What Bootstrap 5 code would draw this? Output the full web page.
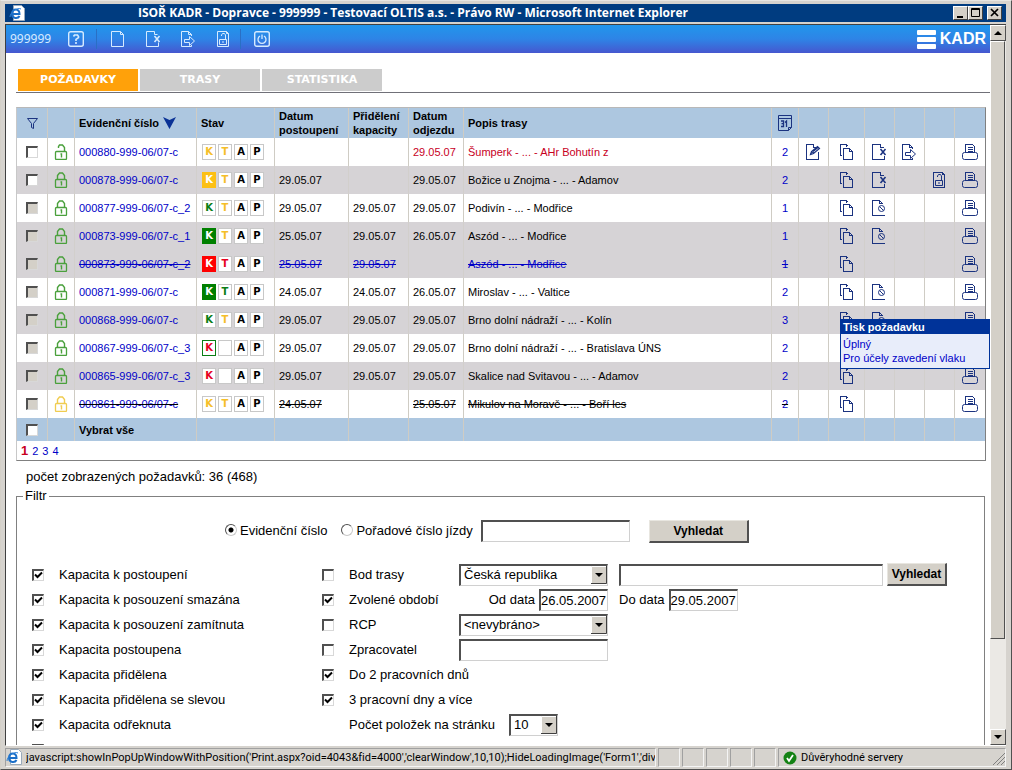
<!DOCTYPE html>
<html lang="cs">
<head>
<meta charset="utf-8">
<meta name="viewport" content="width=device-width, initial-scale=1">
<title>ISOŘ KADR</title>
<link href="https://cdn.jsdelivr.net/npm/bootstrap@5.3.0/dist/css/bootstrap.min.css" rel="stylesheet">
<script src="https://cdn.jsdelivr.net/npm/bootstrap@5.3.0/dist/js/bootstrap.bundle.min.js"></script>
<style>
:root{--face:#d4d0c8;--navy:#1b3380;--line:#cfccc4}
body{font-family:"Liberation Sans",Arial,sans-serif;font-size:11px;line-height:14px;color:#000;background:#d6d3ce}
a{text-decoration:none;color:#0000c8}
button,input,select{font-family:inherit;border-radius:0}
svg{display:block;flex:none}
.ico{width:16px;height:16px;fill:none;stroke:currentColor}
.frame{height:100vh;padding:3px 5px 2px 4px;border:1px solid;border-color:#e8e6e2 #505050 #505050 #d4d0c8}
/* window caption */
.caption{height:18px;background:#003c80;color:#fff;font:bold 12px/18px "Open Sans",sans-serif}
.caption .title{padding-right:152px}
.capbtn{width:15px;height:14px;background:var(--face);border:1px solid;border-color:#fff #404040 #404040 #fff;padding:0;color:#000}
.work{min-height:0;margin-top:2px;border:solid;border-width:1px 0 1px 1px;border-color:#404040 #fff #fff #404040;background:#fff}
/* application toolbar */
.toolbar{height:28px;background:linear-gradient(#2196ec,#2e84e6 50%,#4657cf);color:#d6ebff}
.toolbar .user{font:12px/16px "Noto Sans",sans-serif;width:58px}
.toolbar button{background:none;border:0;padding:0;color:inherit;width:16px}
.toolbar .tools{gap:19px}
.toolbar .sep{width:1px;height:20px;margin:0 13px 0 12px;background:#2a6fc4}
.toolbar .tools+.sep{margin-left:9px}
.brand{font-weight:bold;font-size:16px;line-height:20px;color:#fff}
/* tabs */
.tabs{margin:16px 0 0 10px;padding:0 2px 1px;border-bottom:1px solid #707078;gap:2px}
.tabs a{width:120px;height:22px;background:#ccc;color:#fff;text-align:center;font:bold 11px/21px "DejaVu Sans",sans-serif}
.tabs a.active{background:#ffa10a}
/* request table */
.sheet{margin:14px 4px 0 10px;border:1px solid;border-color:#b8b8b8 #808080 #808080 #c8c8c8}
.req{width:100%;table-layout:fixed;border-collapse:separate;border-spacing:0}
.req th,.req td{border-right:1px solid var(--line);padding:0 4px;height:28px;white-space:nowrap;overflow:hidden}
.req th:last-child,.req td:last-child{border-right:0}
.req thead th{height:30px;background:#adc7e0;white-space:normal}
.req tfoot td{height:23px;background:#adc7e0;font-weight:bold}
.req .grey td{background:#d6d3d6;border-color:#d2cfcc}
.req .c{text-align:center;padding:0}
.req td.c:nth-child(n+10):not(:last-child){padding-right:1px}
.req .c svg,.req .c input{margin:auto}
.req svg{color:var(--navy)}
.req td .ico{shape-rendering:crispEdges}
.req .lk svg{color:#4aa03c;shape-rendering:auto}
.req .lk .wait{color:#f0cc50}
.req .gone,.req .gone a{text-decoration:line-through}
.req .late td{color:#c8001e}
.req .late td svg{color:var(--navy)}
.req .late .lk svg{color:#4aa03c}
.req .dead .gone a{text-decoration-color:#000}
.req td.pop{overflow:visible;position:relative}
.st{display:flex;gap:2px;padding-left:1px}
.st span{width:14px;height:16px;border:1px solid #c8c8c8;background:#fff;font:bold 10px/14px "DejaVu Sans",sans-serif;text-align:center;color:#000}
.st .y{color:#f5be28}.st .g{color:#0a7d14}.st .r{color:#e6001e}
.st .yf{background:#fcc015;border-color:#fcc015;color:#fff}
.st .gf{background:#008000;border-color:#008000;color:#fff}
.st .rf{background:#f00;border-color:#f00;color:#fff}
.st .go{border-color:#0a7d14}
.pager{height:19px;padding-left:4px;gap:4px;line-height:20px}
.pager b{font-size:13px;color:#c8001e}
.printmenu{position:absolute;z-index:5;right:-5px;top:13px;width:150px;border:1px solid #003399;background:#e8edfa;text-align:left}
.printmenu b{display:block;background:#003399;color:#fff;padding:0 2px;height:14px}
.printmenu a{display:block;padding-left:2px;height:14px}
.printmenu div{padding:3px 0}
/* classic controls */
.box{appearance:none;flex:none;width:12px;height:12px;margin:0;border:solid;border-width:2px 1px 1px 2px;border-color:#505050 #d8d8d8 #d8d8d8 #505050;background:#fff center/9px 9px no-repeat;display:block}
.box:disabled{background-color:#d4d0c8}
.box:checked{background-image:url("data:image/svg+xml,%3Csvg xmlns='http://www.w3.org/2000/svg' viewBox='0 0 9 9'%3E%3Cpath d='M1 3.5L3.5 6 8 1.5' fill='none' stroke='%23000' stroke-width='2'/%3E%3C/svg%3E")}
.dot{appearance:none;flex:none;width:12px;height:12px;margin:0 3px 3px 0;border-radius:50%;border:1px solid;border-color:#505050 #c8c8c8 #c8c8c8 #505050;background:#fff}
.dot:checked{background:radial-gradient(circle,#000 2px,#fff 3px)}
label+.dot{margin-left:14px}
.txt,.sel{height:22px;font-size:13px;line-height:16px;padding:0;border:solid;border-width:2px 1px 1px 2px;border-color:#505050 #d0d0d0 #d0d0d0 #505050;background:#fff;color:#000}
.sel{appearance:none;padding:0 18px 0 3px;background:#fff url("data:image/svg+xml,%3Csvg xmlns='http://www.w3.org/2000/svg' viewBox='0 0 16 18'%3E%3Cpath fill='%23d4d0c8' d='M0 0h16v18H0z'/%3E%3Cpath d='M.5 18V.5H16' fill='none' stroke='%23fff'/%3E%3Cpath d='M15.5 0v17.500H0' fill='none' stroke='%23404040'/%3E%3Cpath d='M4 7h8l-4 4z'/%3E%3C/svg%3E") right center/16px 18px no-repeat}
.push{height:23px;width:100px;padding:0;background:var(--face);border:solid;border-width:1px 2px 2px 1px;border-color:#e8e6e0 #505050 #505050 #e8e6e0;font-size:12px;line-height:16px;font-weight:bold;color:#000}
.push.tight{width:60px}
.w-field{width:149px}.w-date{width:69px}.w-wide{width:264px}.w-page{width:49px}
.gapfield{margin-left:11px}
/* filter */
.count{padding:8px 0 0 20px;font-size:13px;line-height:16px}
.filter{margin:3px 5px 0 10px;border:1px solid #808080;padding:0 0 20px;min-width:0;font-size:13px;line-height:16px}
.filter legend{float:none;width:auto;margin:0 0 0 6px;padding:0 2px;font-size:13px;line-height:16px}
.search{height:24px;margin-top:15px;padding-left:208px}
.search .txt{margin-left:8px}
.search .push{margin-left:19px}
.criteria{padding-top:19px}
.left-col{width:290px;padding-left:15px}
.right-col{padding-left:15px}
.crit{height:25px}
.crit>.box+label{margin-left:15px}
.name{width:110px}
.noBox{margin-left:27px;width:160px}
/* scroll bar */
.scroll{width:16px;background:#ebe9e5}
.scroll button,.thumb{background:var(--face);border:1px solid;border-color:#fff #505050 #505050 #fff;padding:0}
.scroll button{height:16px;color:#000}
.thumb{flex:597;margin-right:1px}
.rest{flex:90}
/* status bar */
.status{height:22px;padding-top:2px;gap:2px;font:11px/18px Roboto,sans-serif;font-variant-ligatures:none}
.pane{border:1px solid;border-color:#a0a0a0 #f4f4f4 #f4f4f4 #a0a0a0;height:19px;white-space:nowrap;overflow:hidden;line-height:17px}
.pane.msg{min-width:0}
.pane.tiny{width:22px;flex:none}
.pane.zone{width:228px;flex:none}
</style>
</head>
<body>
<svg width="0" height="0" class="position-absolute" aria-hidden="true">
<symbol id="i-doc" viewBox="0 0 16 16"><path d="M1.500.5h9l3 3v12h-12zM10.500.5v3h3"/></symbol>
<symbol id="i-edit" viewBox="0 0 16 16"><path d="M8.500.5h-7v15h12v-8M8.500.5v3h3"/><path d="M5.500 10.500l1-3 6-5 2 2-6 5zM7 8l2 1M8 7.500l5-4" stroke-width="1.200" shape-rendering="auto"/></symbol>
<symbol id="i-copy" viewBox="0 0 16 16"><path d="M3.500 11.500h-1V.5h6l2 2M5.500 4.500h6l3 3v8h-9zM11.500 4.500v3h3M8.500.5v2"/></symbol>
<symbol id="i-del" viewBox="0 0 16 16"><path d="M9.500.5h-8v15h12v-4M9.500.5v3h3"/><path d="M9.500 5l5 6m0-6l-5 6" stroke-width="1.600" shape-rendering="auto"/></symbol>
<symbol id="i-fwd" viewBox="0 0 16 16"><path d="M11.500 5V3.500l-3-3h-7v15h10V14M8.500.5v3h3"/><path d="M4.500 8.500h5V5.500l5 4.500-5 4.500v-3h-5z" shape-rendering="auto"/></symbol>
<symbol id="i-deny" viewBox="0 0 16 16"><path d="M8.500.5h-7v15h12v-1M8.500.5v3h3l-3-3"/><g shape-rendering="auto"><circle cx="10.500" cy="8.500" r="3"/><path d="M8.500 6.500l4 4"/></g></symbol>
<symbol id="i-ldoc" viewBox="0 0 16 16"><path d="M2.500.5h9l2 2v13h-11zM11.500.5v2h2"/><path d="M4.500 8.500h7v5h-7zM6.500 5V4l1-1.500h2l1 1.500v4.500M8 10v2" shape-rendering="auto"/></symbol>
<symbol id="i-print" viewBox="0 0 16 16"><path d="M3.500 8.500v-8h7l2 2v6M5.500 3.500h5M5.500 5.500h5M5.500 7.500h5" /><rect x=".5" y="8.500" width="15" height="7" rx="2" shape-rendering="auto"/></symbol>
<symbol id="i-lock" viewBox="0 0 16 16"><rect x="2.500" y="7.500" width="11" height="8" rx="1" stroke-width="1.300"/><path d="M4.500 7V3.500l2-2.500h3l2 2.500V7M7.500 10h1v3.500" stroke-width="1.400"/></symbol>
<symbol id="i-open" viewBox="0 0 16 16"><rect x="2.500" y="7.500" width="11" height="8" rx="1" stroke-width="1.300"/><path d="M5.500 4V2.500L6.500 1h3l2 2.500V7M7.500 10h1v3.500" stroke-width="1.400"/></symbol>
<symbol id="i-cal" viewBox="0 0 16 16"><path d="M1.500.5h13v12l-3 3h-10zM1.500 3.500h13M11.500 15.500v-3h3"/><path d="M4 6h2.500v5.500H4M4.500 8.700h2M8 7.500L9.500 6v6" stroke-width="1.300"/></symbol>
<symbol id="i-help" viewBox="0 0 16 16"><rect x=".7" y=".7" width="14.600" height="14.600" rx="2" stroke-width="1.400"/><path d="M5.500 5.500L6.500 4h3l1 1.500v1L8 8.500V10M8 11v2" stroke-width="1.600"/></symbol>
<symbol id="i-pow" viewBox="0 0 16 16"><rect x=".7" y=".7" width="14.600" height="14.600" rx="2" stroke-width="1.400"/><path d="M6 5a4 4 0 1 0 4 0M8 3.500V8" stroke-width="1.300"/></symbol>
<symbol id="i-ie" viewBox="0 0 16 16"><path d="M4.500.5h8l3 3v12h-11z" fill="#fff" stroke="#9ab"/><path d="M3 9h7.500C10.500 3 3 3 3 8.500s6 5.500 7.500 2.500" stroke="#1b6fc8" stroke-width="2"/><path d="M1 12C1 7 9 2 12 4" stroke="#2a80d8"/></symbol>
</svg>

<div class="frame d-flex flex-column">
  <header class="caption d-flex align-items-center pe-1">
    <svg class="ico ms-1"><use href="#i-ie"/></svg>
    <div class="title flex-grow-1 text-center text-nowrap overflow-hidden">ISOŘ KADR - Dopravce - 999999 - Testovací OLTIS a.s. - Právo RW - Microsoft Internet Explorer</div>
    <button class="capbtn" aria-label="Minimalizovat"><svg width="13" height="12"><path d="M3 9h6v2H3z"/></svg></button>
    <button class="capbtn" aria-label="Maximalizovat"><svg width="13" height="12" fill="none" stroke="#000"><path d="M2.500 1.500h8v8h-8zM2 2.500h9"/></svg></button>
    <button class="capbtn ms-1" aria-label="Zavřít"><svg width="13" height="12"><path d="M3 2l7 7M10 2L3 9" stroke="#000" stroke-width="1.700"/></svg></button>
  </header>

  <div class="work d-flex flex-grow-1 overflow-hidden">
    <main class="flex-grow-1 overflow-hidden">
      <nav class="toolbar d-flex align-items-center ps-1" aria-label="Nástroje">
        <span class="user">999999</span>
        <button aria-label="Nápověda"><svg class="ico"><use href="#i-help"/></svg></button>
        <span class="sep"></span>
        <div class="tools d-flex">
          <button aria-label="Nový"><svg class="ico"><use href="#i-doc"/></svg></button>
          <button aria-label="Smazat"><svg class="ico"><use href="#i-del"/></svg></button>
          <button aria-label="Postoupit"><svg class="ico"><use href="#i-fwd"/></svg></button>
          <button aria-label="Odemknout"><svg class="ico"><use href="#i-ldoc"/></svg></button>
        </div>
        <span class="sep"></span>
        <button aria-label="Odhlásit"><svg class="ico"><use href="#i-pow"/></svg></button>
        <div class="ms-auto me-1 d-flex align-items-center gap-1">
          <svg width="19" height="19" fill="#fff"><rect width="19" height="5" rx="1"/><rect y="7" width="19" height="5" rx="1"/><rect y="14" width="19" height="5" rx="1"/></svg>
          <span class="brand">KADR</span>
        </div>
      </nav>

      <nav class="tabs d-flex" aria-label="Sekce">
        <a href="#" class="active">POŽADAVKY</a><a href="#">TRASY</a><a href="#">STATISTIKA</a>
      </nav>

      <div class="sheet">
        <table class="req">
          <colgroup><col style="width:31px"><col style="width:27px"><col style="width:122px"><col style="width:78px"><col style="width:74px"><col style="width:60px"><col style="width:55px"><col><col style="width:27px"><col style="width:30px"><col style="width:36px"><col style="width:30px"><col style="width:30px"><col style="width:30px"><col style="width:30px"></colgroup>
          <thead><tr>
            <th class="c"><svg class="ico"><path d="M3.500 3.500h10l-4 5v5l-2-1v-4z"/></svg></th><th></th>
            <th><span class="d-flex gap-1">Evidenční číslo <svg width="13" height="14"><path d="M0 1l6.500 3L13 1 6.500 13z" fill="#0a3296"/></svg></span></th>
            <th>Stav</th><th>Datum postoupení</th><th>Přidělení kapacity</th><th>Datum odjezdu</th><th>Popis trasy</th>
            <th class="c"><svg class="ico"><use href="#i-cal"/></svg></th><th></th><th></th><th></th><th></th><th></th><th></th>
          </tr></thead>
          <tbody>
          <tr class="late"><td class="c"><input type="checkbox" class="box" aria-label="Vybrat 880"></td><td class="c lk"><svg class="ico"><use href="#i-open"/></svg></td><td><a href="#">000880-999-06/07-c</a></td><td><div class="st"><span class="y">K</span><span class="y">T</span><span>A</span><span>P</span></div></td><td></td><td></td><td>29.05.07</td><td>Šumperk - ... - AHr Bohutín z</td><td class="c"><a href="#">2</a></td><td class="c"><svg class="ico"><use href="#i-edit"/></svg></td><td class="c"><svg class="ico"><use href="#i-copy"/></svg></td><td class="c"><svg class="ico"><use href="#i-del"/></svg></td><td class="c"><svg class="ico"><use href="#i-fwd"/></svg></td><td></td><td class="c"><svg class="ico"><use href="#i-print"/></svg></td></tr>
          <tr class="grey"><td class="c"><input type="checkbox" class="box" aria-label="Vybrat 878"></td><td class="c lk"><svg class="ico"><use href="#i-lock"/></svg></td><td><a href="#">000878-999-06/07-c</a></td><td><div class="st"><span class="yf">K</span><span class="y">T</span><span>A</span><span>P</span></div></td><td>29.05.07</td><td></td><td>29.05.07</td><td>Božice u Znojma - ... - Adamov</td><td class="c"><a href="#">2</a></td><td></td><td class="c"><svg class="ico"><use href="#i-copy"/></svg></td><td class="c"><svg class="ico"><use href="#i-del"/></svg></td><td></td><td class="c"><svg class="ico"><use href="#i-ldoc"/></svg></td><td class="c"><svg class="ico"><use href="#i-print"/></svg></td></tr>
          <tr><td class="c"><input type="checkbox" class="box" disabled aria-label="Vybrat 877"></td><td class="c lk"><svg class="ico"><use href="#i-lock"/></svg></td><td><a href="#">000877-999-06/07-c_2</a></td><td><div class="st"><span class="g">K</span><span class="y">T</span><span>A</span><span>P</span></div></td><td>29.05.07</td><td>29.05.07</td><td>29.05.07</td><td>Podivín - ... - Modřice</td><td class="c"><a href="#">1</a></td><td></td><td class="c"><svg class="ico"><use href="#i-copy"/></svg></td><td class="c"><svg class="ico"><use href="#i-deny"/></svg></td><td></td><td></td><td class="c"><svg class="ico"><use href="#i-print"/></svg></td></tr>
          <tr class="grey"><td class="c"><input type="checkbox" class="box" disabled aria-label="Vybrat 873_1"></td><td class="c lk"><svg class="ico"><use href="#i-lock"/></svg></td><td><a href="#">000873-999-06/07-c_1</a></td><td><div class="st"><span class="gf">K</span><span class="y">T</span><span>A</span><span>P</span></div></td><td>25.05.07</td><td>29.05.07</td><td>26.05.07</td><td>Aszód - ... - Modřice</td><td class="c"><a href="#">1</a></td><td></td><td class="c"><svg class="ico"><use href="#i-copy"/></svg></td><td class="c"><svg class="ico"><use href="#i-deny"/></svg></td><td></td><td></td><td class="c"><svg class="ico"><use href="#i-print"/></svg></td></tr>
          <tr class="grey"><td class="c"><input type="checkbox" class="box" disabled aria-label="Vybrat 873_2"></td><td class="c lk"><svg class="ico"><use href="#i-lock"/></svg></td><td class="gone"><a href="#">000873-999-06/07-c_2</a></td><td><div class="st"><span class="rf">K</span><span class="r">T</span><span>A</span><span>P</span></div></td><td class="gone"><a href="#">25.05.07</a></td><td class="gone"><a href="#">29.05.07</a></td><td></td><td class="gone"><a href="#">Aszód - ... - Modřice</a></td><td class="c gone"><a href="#">1</a></td><td></td><td class="c"><svg class="ico"><use href="#i-copy"/></svg></td><td></td><td></td><td></td><td class="c"><svg class="ico"><use href="#i-print"/></svg></td></tr>
          <tr><td class="c"><input type="checkbox" class="box" disabled aria-label="Vybrat 871"></td><td class="c lk"><svg class="ico"><use href="#i-lock"/></svg></td><td><a href="#">000871-999-06/07-c</a></td><td><div class="st"><span class="gf">K</span><span class="g">T</span><span>A</span><span>P</span></div></td><td>24.05.07</td><td>24.05.07</td><td>26.05.07</td><td>Miroslav - ... - Valtice</td><td class="c"><a href="#">2</a></td><td></td><td class="c"><svg class="ico"><use href="#i-copy"/></svg></td><td class="c"><svg class="ico"><use href="#i-deny"/></svg></td><td></td><td></td><td class="c"><svg class="ico"><use href="#i-print"/></svg></td></tr>
          <tr class="grey"><td class="c"><input type="checkbox" class="box" disabled aria-label="Vybrat 868"></td><td class="c lk"><svg class="ico"><use href="#i-lock"/></svg></td><td><a href="#">000868-999-06/07-c</a></td><td><div class="st"><span class="g">K</span><span class="y">T</span><span>A</span><span>P</span></div></td><td>29.05.07</td><td>29.05.07</td><td>29.05.07</td><td>Brno dolní nádraží - ... - Kolín</td><td class="c"><a href="#">3</a></td><td></td><td class="c"><svg class="ico"><use href="#i-copy"/></svg></td><td class="c"><svg class="ico"><use href="#i-deny"/></svg></td><td></td><td></td><td class="c pop"><svg class="ico"><use href="#i-print"/></svg><div class="printmenu"><b>Tisk požadavku</b><div><a href="#">Úplný</a><a href="#">Pro účely zavedení vlaku</a></div></div></td></tr>
          <tr><td class="c"><input type="checkbox" class="box" disabled aria-label="Vybrat 867_3"></td><td class="c lk"><svg class="ico"><use href="#i-lock"/></svg></td><td><a href="#">000867-999-06/07-c_3</a></td><td><div class="st"><span class="r go">K</span><span></span><span>A</span><span>P</span></div></td><td>29.05.07</td><td>29.05.07</td><td>29.05.07</td><td>Brno dolní nádraží - ... - Bratislava ÚNS</td><td class="c"><a href="#">2</a></td><td></td><td></td><td></td><td></td><td></td><td></td></tr>
          <tr class="grey"><td class="c"><input type="checkbox" class="box" disabled aria-label="Vybrat 865_3"></td><td class="c lk"><svg class="ico"><use href="#i-lock"/></svg></td><td><a href="#">000865-999-06/07-c_3</a></td><td><div class="st"><span class="r">K</span><span></span><span>A</span><span>P</span></div></td><td>29.05.07</td><td>29.05.07</td><td>29.05.07</td><td>Skalice nad Svitavou - ... - Adamov</td><td class="c"><a href="#">2</a></td><td></td><td class="c"><svg class="ico"><use href="#i-copy"/></svg></td><td></td><td></td><td></td><td class="c"><svg class="ico"><use href="#i-print"/></svg></td></tr>
          <tr class="dead"><td class="c"><input type="checkbox" class="box" disabled aria-label="Vybrat 861"></td><td class="c lk"><svg class="ico wait"><use href="#i-lock"/></svg></td><td class="gone"><a href="#">000861-999-06/07-c</a></td><td><div class="st"><span class="y">K</span><span class="y">T</span><span>A</span><span>P</span></div></td><td class="gone">24.05.07</td><td></td><td class="gone">25.05.07</td><td class="gone">Mikulov na Moravě - ... - Boří les</td><td class="c gone"><a href="#">2</a></td><td></td><td class="c"><svg class="ico"><use href="#i-copy"/></svg></td><td></td><td></td><td></td><td class="c"><svg class="ico"><use href="#i-print"/></svg></td></tr>
          </tbody>
          <tfoot><tr><td class="c"><input type="checkbox" class="box" id="all"></td><td></td><td><label for="all">Vybrat vše</label></td><td></td><td></td><td></td><td></td><td></td><td></td><td></td><td></td><td></td><td></td><td></td><td></td></tr></tfoot>
        </table>
        <div class="pager d-flex"><b>1</b><a href="#">2</a><a href="#">3</a><a href="#">4</a></div>
      </div>

      <div class="count">počet zobrazených požadavků: 36 (468)</div>

      <fieldset class="filter">
        <legend>Filtr</legend>
        <div class="search d-flex align-items-center">
          <input type="radio" name="by" class="dot" id="r1" checked><label for="r1">Evidenční číslo</label>
          <input type="radio" name="by" class="dot" id="r2"><label for="r2">Pořadové číslo jízdy</label>
          <input type="text" class="txt w-field" aria-label="Hledané číslo">
          <button class="push">Vyhledat</button>
        </div>
        <div class="criteria d-flex">
          <div class="left-col flex-shrink-0">
            <div class="crit d-flex align-items-center"><input type="checkbox" class="box" id="k1" checked><label for="k1">Kapacita k postoupení</label></div>
            <div class="crit d-flex align-items-center"><input type="checkbox" class="box" id="k2" checked><label for="k2">Kapacita k posouzení smazána</label></div>
            <div class="crit d-flex align-items-center"><input type="checkbox" class="box" id="k3" checked><label for="k3">Kapacita k posouzení zamítnuta</label></div>
            <div class="crit d-flex align-items-center"><input type="checkbox" class="box" id="k4" checked><label for="k4">Kapacita postoupena</label></div>
            <div class="crit d-flex align-items-center"><input type="checkbox" class="box" id="k5" checked><label for="k5">Kapacita přidělena</label></div>
            <div class="crit d-flex align-items-center"><input type="checkbox" class="box" id="k6" checked><label for="k6">Kapacita přidělena se slevou</label></div>
            <div class="crit d-flex align-items-center"><input type="checkbox" class="box" id="k7" checked><label for="k7">Kapacita odřeknuta</label></div>
            <div class="crit d-flex align-items-center"><input type="checkbox" class="box" aria-label="Další stav"></div>
          </div>
          <div class="right-col flex-grow-1">
            <div class="crit d-flex align-items-center"><input type="checkbox" class="box" id="p1"><label class="name" for="p1">Bod trasy</label><select class="sel w-field" aria-label="Stát"><option>Česká republika</option></select><input type="text" class="txt w-wide gapfield" aria-label="Bod trasy"><button class="push ms-1 tight">Vyhledat</button></div>
            <div class="crit d-flex align-items-center"><input type="checkbox" class="box" id="p2" checked><label class="name" for="p2">Zvolené období</label><div class="d-flex align-items-center justify-content-end gap-1 w-field"><label for="od">Od data</label><input type="text" id="od" class="txt w-date" value="26.05.2007"></div><label class="gapfield" for="do">Do data</label><input type="text" id="do" class="txt w-date ms-1" value="29.05.2007"></div>
            <div class="crit d-flex align-items-center"><input type="checkbox" class="box" id="p3"><label class="name" for="p3">RCP</label><select class="sel w-field" aria-label="RCP"><option>&lt;nevybráno&gt;</option></select></div>
            <div class="crit d-flex align-items-center"><input type="checkbox" class="box" id="p4"><label class="name" for="p4">Zpracovatel</label><input type="text" class="txt w-field" aria-label="Zpracovatel"></div>
            <div class="crit d-flex align-items-center"><input type="checkbox" class="box" id="p5" checked><label for="p5">Do 2 pracovních dnů</label></div>
            <div class="crit d-flex align-items-center"><input type="checkbox" class="box" id="p6" checked><label for="p6">3 pracovní dny a více</label></div>
            <div class="crit d-flex align-items-center"><label class="noBox" for="pg">Počet položek na stránku</label><select id="pg" class="sel w-page"><option>10</option></select></div>
          </div>
        </div>
      </fieldset>
    </main>

    <div class="scroll d-flex flex-column flex-shrink-0">
      <button aria-label="Nahoru"><svg width="14" height="14"><path d="M3 9h8L7 5z"/></svg></button>
      <div class="thumb"></div><div class="rest"></div>
      <button aria-label="Dolů"><svg width="14" height="14"><path d="M3 5h8L7 9z"/></svg></button>
    </div>
  </div>

  <footer class="status d-flex">
    <div class="pane msg d-flex flex-grow-1"><svg class="ico me-1"><use href="#i-ie"/></svg><span class="overflow-hidden">javascript:showInPopUpWindowWithPosition('Print.aspx?oid=4043&amp;fid=4000','clearWindow',10,10);HideLoadingImage('Form1','div</span></div>
    <div class="pane tiny"></div><div class="pane tiny"></div><div class="pane tiny"></div><div class="pane tiny"></div><div class="pane tiny"></div>
    <div class="pane zone d-flex align-items-center ps-1">
      <svg width="14" height="14"><circle cx="7" cy="7" r="6.500" fill="#148214"/><path d="M4 7l2 3 4-6" fill="none" stroke="#fff" stroke-width="1.800"/></svg>
      <span class="ms-1">Důvěryhodné servery</span>
      <svg class="ms-auto" width="13" height="16" stroke="#808080"><path d="M1 15L13 3M5 15l8-8M9 15l4-4"/></svg>
    </div>
  </footer>
</div>
</body>
</html>
